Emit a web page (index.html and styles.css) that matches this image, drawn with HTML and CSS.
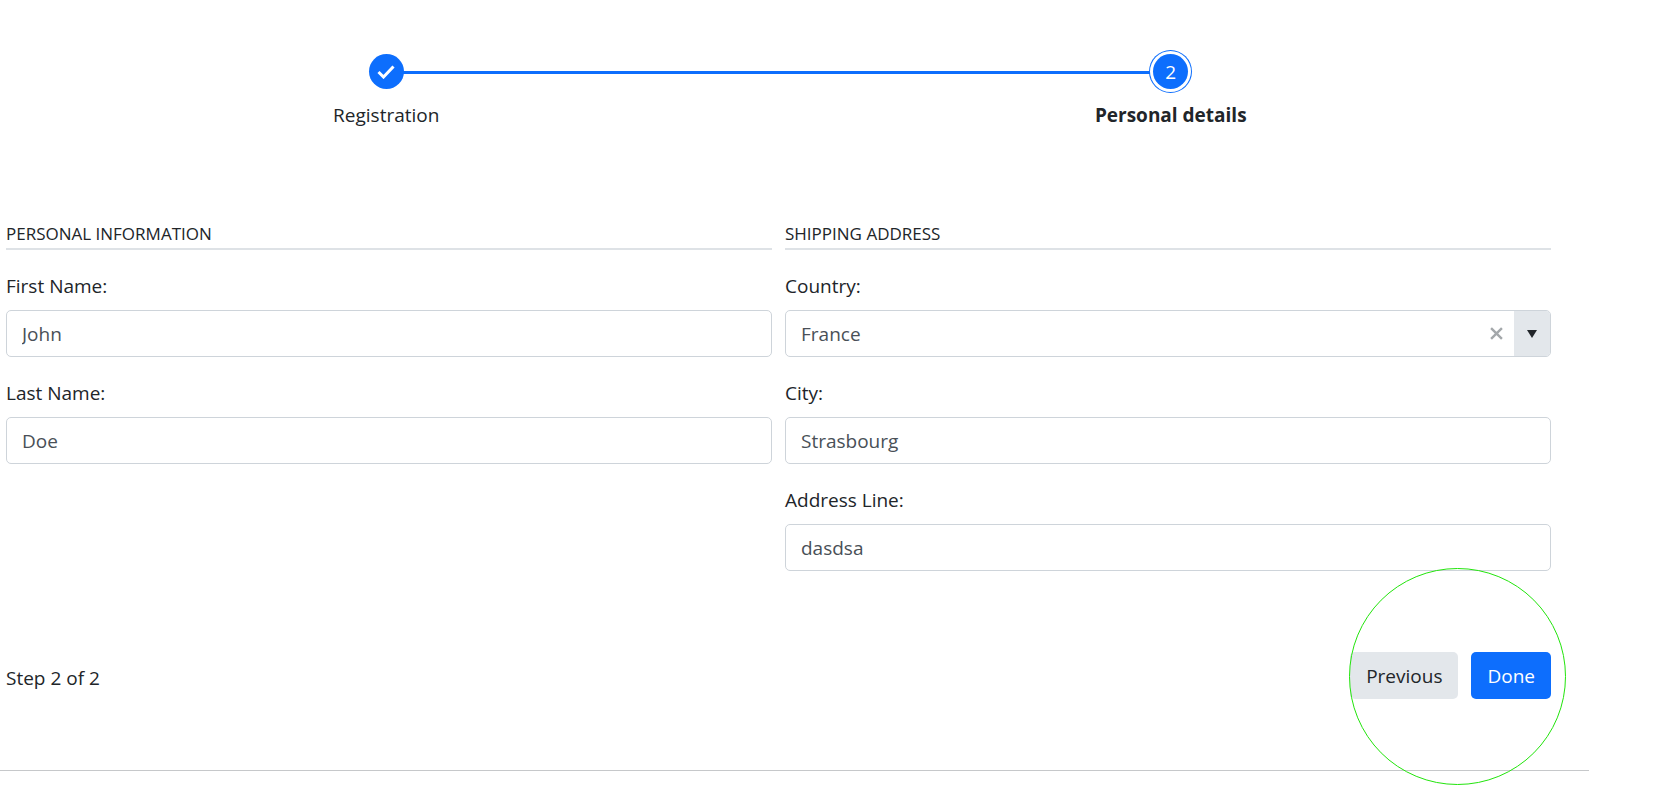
FILE: index.html
```html
<!DOCTYPE html>
<html lang="en">
<head>
<meta charset="utf-8">
<meta name="viewport" content="width=device-width, initial-scale=1">
<title>Personal details</title>
<link rel="stylesheet" href="styles.css">
</head>
<body>
<main class="page">
  <form class="wizard">
    <ol class="stepper">
      <li class="step">
        <span class="marker">
          <svg class="check" viewBox="0 0 18 14" aria-hidden="true"><path d="M1.5 7 L6.5 12 L16.5 1.5"/></svg>
        </span>
        <span class="step-label">Registration</span>
      </li>
      <li class="step step-active" aria-current="step">
        <span class="marker marker-active">2</span>
        <span class="step-label">Personal details</span>
      </li>
    </ol>
    <div class="columns">
      <section class="group">
        <h2 class="group-title">PERSONAL INFORMATION</h2>
        <div class="field">
          <label for="first">First Name:</label>
          <input class="box" id="first" type="text" value="John">
        </div>
        <div class="field">
          <label for="last">Last Name:</label>
          <input class="box" id="last" type="text" value="Doe">
        </div>
      </section>
      <section class="group">
        <h2 class="group-title">SHIPPING ADDRESS</h2>
        <div class="field">
          <label for="country">Country:</label>
          <div class="box combo">
            <select class="combo-select" id="country"><option>France</option></select>
            <button class="combo-clear" type="button" aria-label="Clear">
              <svg class="cross" viewBox="0 0 12 12" aria-hidden="true"><path d="M1 1 L11 11 M11 1 L1 11"/></svg>
            </button>
            <button class="combo-open" type="button" aria-label="Open list">
              <svg class="arrow" viewBox="0 0 10 8" aria-hidden="true"><path d="M0 0 H10 L5 8 Z"/></svg>
            </button>
          </div>
        </div>
        <div class="field">
          <label for="city">City:</label>
          <input class="box" id="city" type="text" value="Strasbourg">
        </div>
        <div class="field">
          <label for="address">Address Line:</label>
          <input class="box" id="address" type="text" value="dasdsa">
        </div>
      </section>
    </div>
    <footer class="footer">
      <span class="progress">Step 2 of 2</span>
      <div class="actions">
        <button class="btn btn-secondary" type="button">Previous</button>
        <button class="btn btn-primary" type="submit">Done</button>
        <span class="highlight"></span>
      </div>
    </footer>
  </form>
</main>
</body>
</html>
```
FILE: styles.css
```css
* {
  box-sizing: border-box;
}

body {
  min-height: 100vh;
  margin: 0;
  background: #fff;
  color: #212529;
  font: 19px/30px "Open Sans", "Noto Sans", sans-serif;
}

input,
select,
button {
  font: inherit;
  color: inherit;
}

.page {
  margin-right: 68px;
  padding: 50px 38px 71px 6px;
  border-bottom: 1px solid #c6c8ca;
}

/* Stepper */
.stepper {
  display: flex;
  margin: 0 -12px;
  padding: 0;
  list-style: none;
}

.step {
  position: relative;
  flex: 1;
  display: flex;
  flex-direction: column;
  align-items: center;
  gap: 7px;
}

.step-active::before {
  content: "";
  position: absolute;
  top: 21px;
  right: 50%;
  width: 100%;
  height: 3px;
  background: #0d6efd;
}

.marker {
  position: relative;
  z-index: 1;
  display: flex;
  align-items: center;
  justify-content: center;
  width: 35px;
  height: 35px;
  margin: 4px;
  border-radius: 50%;
  background: #0d6efd;
  color: #fff;
}

.marker-active {
  box-shadow: 0 0 0 3px #fff, 0 0 0 4px #0d6efd;
}

.check {
  width: 18px;
  height: 14px;
  fill: none;
  stroke: #fff;
  stroke-width: 3;
}

.step-active .step-label {
  font-weight: 700;
}

/* Form */
.columns {
  display: grid;
  grid-template-columns: 1fr 1fr;
  gap: 13px;
  margin-top: 89px;
}

.group-title {
  margin: 0;
  border-bottom: 2px solid #dee2e6;
  font-size: 17px;
  line-height: 29px;
  font-weight: 400;
}

.field {
  display: flex;
  flex-direction: column;
  gap: 9px;
  margin-top: 21px;
}

.box {
  width: 100%;
  height: 47px;
  padding: 0 15px;
  border: 1px solid #ced4da;
  border-radius: 5px;
  background: #fff;
  color: #495057;
}

.combo {
  display: flex;
  padding-right: 0;
  overflow: hidden;
}

.combo-select {
  flex: 1;
  min-width: 0;
  padding: 0;
  border: 0;
  background: none;
  appearance: none;
}

.combo-clear,
.combo-open {
  display: flex;
  align-items: center;
  justify-content: center;
  width: 36px;
  padding: 0;
  border: 0;
  background: none;
}

.combo-open {
  background: #e3e7eb;
}

.cross {
  width: 13px;
  height: 13px;
  fill: none;
  stroke: #a4a8ab;
  stroke-width: 2.2;
}

.arrow {
  width: 10px;
  height: 8px;
  fill: #212529;
}

/* Footer */
.footer {
  display: flex;
  align-items: center;
  justify-content: space-between;
  margin-top: 81px;
}

.progress {
  padding-top: 4px;
}

.actions {
  position: relative;
  display: flex;
  gap: 13px;
}

.btn {
  height: 47px;
  padding: 0 16px;
  border: 0;
  border-radius: 5px;
}

.btn-secondary {
  background: #e3e7eb;
}

.btn-primary {
  background: #0d6efd;
  color: #fff;
}

.highlight {
  position: absolute;
  top: -84px;
  right: -15px;
  width: 217px;
  height: 217px;
  border: 1px solid #22e40c;
  border-radius: 50%;
  pointer-events: none;
}
```
